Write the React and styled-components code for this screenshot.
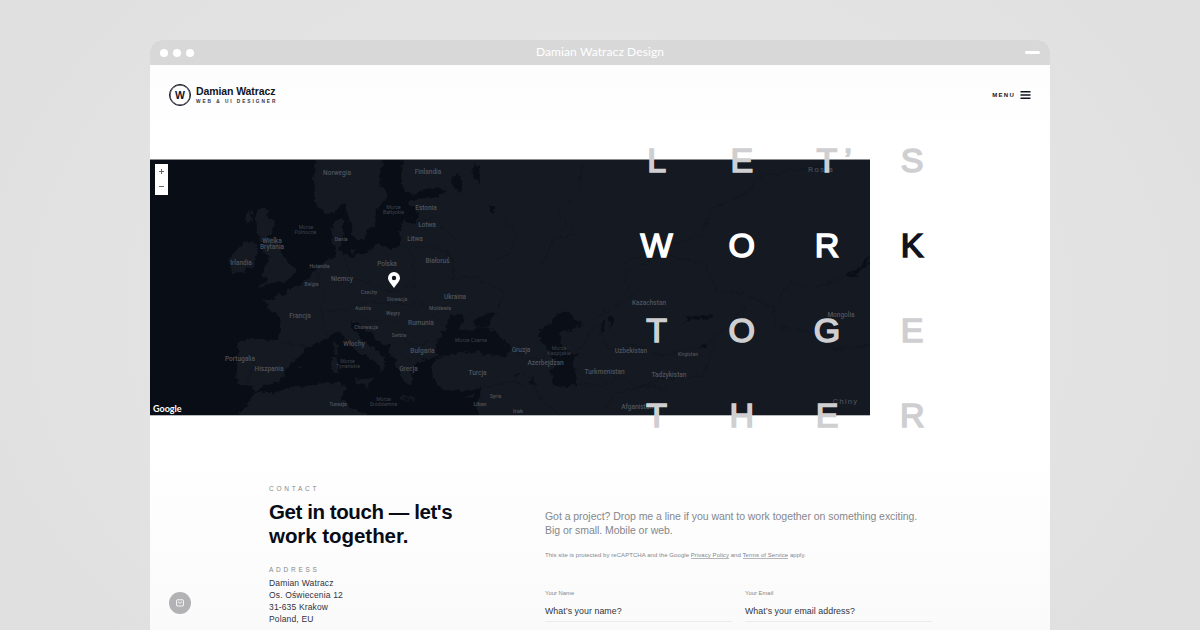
import React from "react";
import styled, { createGlobalStyle } from "styled-components";

const Global = createGlobalStyle`
  * { box-sizing: border-box; }
  body {
    margin: 0;
    overflow: hidden;
    font-family: "Liberation Sans", Arial, sans-serif;
    color: #10141f;
    background: #e1e1e1;
  }
`;

const Stage = styled.div`
  height: 630px;
  padding: 40px 150px 0;
  overflow: hidden;
  background: radial-gradient(ellipse 640px 480px at 50% 50%, #e5e5e5 0%, #e3e3e3 70%, #e0e0e0 100%);
`;

const Browser = styled.div`
  height: 590px;
  display: flex;
  flex-direction: column;
  overflow: hidden;
  border-radius: 12px 12px 0 0;
  background: #fff;
`;

const TitleBar = styled.div`
  height: 25px;
  flex: none;
  display: grid;
  grid-template-columns: 1fr auto 1fr;
  align-items: center;
  padding: 0 10px;
  background: #d8d8d8;
`;

const Dots = styled.div`
  display: flex;
  gap: 5px;
  padding-top: 1px;
`;

const Dot = styled.i`
  width: 8px;
  height: 8px;
  border-radius: 50%;
  background: #fff;
`;

const Title = styled.span`
  font: 400 12px/22px Lato, sans-serif;
  padding-bottom: 2px;
  letter-spacing: 0.1px;
  color: #fff;
`;

const Minimise = styled.i`
  justify-self: end;
  width: 15px;
  height: 3px;
  border-radius: 1.5px;
  background: #fff;
`;

const Page = styled.div`
  flex: 1;
  display: flex;
  flex-direction: column;
  position: relative;
  background: linear-gradient(#fdfdfd 0, #fff 80px, #fff 380px, #fafafa 100%);
`;

const Header = styled.header`
  height: 94px;
  flex: none;
  display: flex;
  align-items: flex-start;
  justify-content: space-between;
  padding: 19px 19px 0;
`;

const Brand = styled.div`
  display: flex;
  align-items: center;
  gap: 5px;
`;

const Logo = styled.div`
  width: 22px;
  height: 22px;
  display: grid;
  place-items: center;
  border: 1.5px solid #10141f;
  box-shadow: inset 0 0 0 0.5px #10141f;
  border-radius: 50%;
  font-size: 10.5px;
  font-weight: 700;
  line-height: 20px;
`;

const BrandName = styled.div`
  font-size: 10.5px;
  font-weight: 700;
  line-height: 12px;
  letter-spacing: -0.1px;
`;

const BrandRole = styled.div`
  font-size: 4.8px;
  font-weight: 700;
  line-height: 6px;
  margin-top: 2px;
  letter-spacing: 1.93px;
  white-space: nowrap;
  color: #30343d;
`;

const MenuButton = styled.div`
  display: flex;
  align-items: center;
  gap: 5px;
  height: 22px;
  font-size: 6px;
  font-weight: 700;
  letter-spacing: 1.25px;
`;

const Hero = styled.section`
  height: 257px;
  flex: none;
  position: relative;
`;

const MapBox = styled.div`
  width: 720px;
  height: 257px;
  border-top: 1px solid #8b8d91;
  border-bottom: 1px solid #b8babd;
`;

const Drawing = styled.svg`
  display: block;
`;

const ZoomControl = styled.div`
  position: absolute;
  left: 5px;
  top: 5px;
  width: 13px;
  height: 31px;
  display: grid;
  grid-template-rows: 1fr 1fr;
  place-items: center;
  background: #fff;
  color: #555;
`;

const GoogleMark = styled.span`
  position: absolute;
  left: 3px;
  bottom: 1px;
  font: 700 9px/12px Lato, sans-serif;
  color: #fff;
`;

const Letters = styled.div`
  position: absolute;
  left: 464px;
  top: -42px;
  display: grid;
  grid-template-columns: repeat(4, 85.2px);
  grid-auto-rows: 85.2px;
  place-items: center;
  font-size: 34px;
  font-weight: 400;
  line-height: 1;
`;

const Letter = styled.span`
  position: relative;
  color: ${(p) => p.$color};
  -webkit-text-stroke: 1.6px ${(p) => p.$color};
`;

const Apostrophe = styled.span`
  position: absolute;
  left: calc(100% + 7px);
`;

const Contact = styled.section`
  display: grid;
  grid-template-columns: 276px 387px;
  padding: 0 0 0 119px;
`;

const Info = styled.div`
  padding-top: 69px;
`;

const Eyebrow = styled.div`
  font-size: 6.5px;
  line-height: 8px;
  letter-spacing: 2.75px;
  color: #85878c;
`;

const Heading = styled.h1`
  margin: 7px 0 18px;
  font-size: 20.5px;
  line-height: 24px;
  font-weight: 700;
  color: #070c17;
`;

const HeadingLine = styled.span`
  display: block;
  letter-spacing: ${(p) => p.$tracking}px;
`;

const Address = styled.address`
  margin-top: 3px;
  font-style: normal;
  font-size: 8.5px;
  line-height: 12px;
  letter-spacing: 0.15px;
  color: #30343d;
`;

const FormSide = styled.div`
  padding-top: 93px;
`;

const Lead = styled.p`
  margin: 0;
  font-size: 10.5px;
  line-height: 14px;
  letter-spacing: -0.045px;
  white-space: nowrap;
  color: #85878c;
`;

const Legal = styled.p`
  margin: 14px 0 0;
  font-size: 6px;
  line-height: 8px;
  letter-spacing: 0.06px;
  white-space: nowrap;
  color: #85878c;
`;

const Link = styled.a`
  border-bottom: 1px solid #b5b6b9;
`;

const Fields = styled.div`
  display: grid;
  grid-template-columns: 187px 187px;
  gap: 13px;
  margin-top: 30px;
`;

const Field = styled.div`
  height: 33px;
  border-bottom: 1px solid #ebebec;
`;

const FieldLabel = styled.div`
  font-size: 5.9px;
  line-height: 8px;
  color: #85878c;
`;

const FieldValue = styled.div`
  margin-top: 8px;
  font-size: 8.8px;
  line-height: 12px;
  letter-spacing: 0.06px;
  color: #30343d;
`;

const MailButton = styled.div`
  position: absolute;
  left: 19px;
  top: 527px;
  width: 22px;
  height: 22px;
  display: grid;
  place-items: center;
  border-radius: 50%;
  background: #b2b2b4;
`;

const countries = [
  ["Norwegia", 337, 175, 6.5], ["Finlandia", 428, 174, 6.5], ["Estonia", 426, 210, 6.5],
  ["Łotwa", 427, 227, 6.5], ["Litwa", 415, 241, 6.5], ["Białoruś", 437.5, 263, 6.5],
  ["Wielka", 272, 243, 6.5], ["Brytania", 272, 249, 6.5], ["Irlandia", 241, 265, 6.5],
  ["Dania", 341, 241, 5], ["Holandia", 319.5, 268, 5], ["Belgia", 311.5, 286, 5],
  ["Niemcy", 342, 280.5, 6.5], ["Polska", 387, 265.5, 6.5], ["Czechy", 369, 294, 5],
  ["Słowacja", 397, 301, 5], ["Ukraina", 455, 298.5, 6.5], ["Francja", 300, 318, 6.5],
  ["Austria", 363, 310, 5], ["Węgry", 393, 314.5, 5], ["Mołdawia", 440, 310, 5],
  ["Rumunia", 421, 324.5, 6.5], ["Chorwacja", 366, 329, 5], ["Serbia", 399, 336.5, 5],
  ["Włochy", 354, 345.5, 6.5], ["Bułgaria", 422.5, 353, 6.5], ["Portugalia", 240, 361, 6.5],
  ["Hiszpania", 269, 370.5, 6.5], ["Grecja", 408.5, 371, 6.5], ["Turcja", 477.5, 374.5, 6.5],
  ["Gruzja", 521, 351.5, 6.5], ["Azerbejdżan", 545.5, 364.5, 6.5], ["Tunezja", 338, 406, 5],
  ["Syria", 495.5, 398, 5], ["Liban", 480, 406, 5.3], ["Irak", 518, 413, 6],
  ["Turkmenistan", 604.5, 374, 6.5], ["Uzbekistan", 631, 353, 6.5], ["Kirgistan", 688, 356, 5],
  ["Tadżykistan", 669, 377, 6.5], ["Kazachstan", 649, 305, 6.5], ["Mongolia", 841, 316.5, 6.5],
];

const seas = [
  ["Morze", 306, 229], ["Północne", 305.5, 233.5], ["Morze", 393.5, 209], ["Bałtyckie", 393.5, 213.5],
  ["Morze", 347.5, 363], ["Tyrreńskie", 348, 368], ["Morze", 383.5, 401], ["Śródziemne", 383.5, 406],
  ["Morze Czarne", 471, 342], ["Morze", 559, 350], ["Kaspijskie", 559, 355],
];

const land = [
  // Scandinavia
  "M318 155 316 166 313 172 315 184 314 196 317 206 322 213 330 214 338 209 345 203 347 212 351 226 353 236 358 241 364 238 367 230 375 226 376 216 379 206 387 197 386 190 380 186 379 175 384 155Z",
  // Continental Europe and Asia
  "M402 155 401 178 405 190 411 194 425 190 438 187 447 192 436 197 416 199 408 203 411 206 418 210 417 223 410 224 405 218 400 228 401 243 394 249 388 247 378 245 369 250 358 254 350 257 343 255 339 248 343 232 342 219 335 222 331 229 333 245 336 257 320 264 313 272 303 283 296 286 288 290 285 297 276 293 275 300 262 300 270 308 279 317 281 335 277 340 250 338 240 340 237 343 239 352 237 368 236 378 240 384 250 386 256 391 264 386 275 384 284 378 287 368 303 354 305 347 318 343 328 338 337 332 345 338 355 350 365 356 378 362 382 374 385 369 383 362 387 362 377 350 366 343 354 330 352 323 358 323 368 332 380 342 391 348 393 360 400 372 406 385 412 382 411 370 417 363 430 359 436 357 432 366 434 377 438 387 450 391 465 391 481 387 478 404 476 420 890 420 890 150 402 150Z",
  // North Africa
  "M234 420 244 409 251 401 254 393 275 393 290 387 315 385 338 383 345 386 342 399 350 408 365 414 370 420Z",
  // British Isles
  "M258 210 270 208 267 218 276 220 272 232 267 237 276 241 283 253 288 263 296 268 292 277 285 282 268 285 259 288 267 280 262 274 266 264 271 256 262 253 264 243 257 234 258 225 254 219Z",
  "M243 243 255 242 258 250 254 265 243 272 232 274 230 262 233 252 240 248Z",
  // Islands
  "M333 344 337 344 338 355 334 354Z", "M332 357 338 357 338 372 332 372Z",
  "M355 379 371 377 368 388 357 384Z", "M399 397 416 398 415 400 400 399Z", "M466 396 475 393 472 399Z",
  "M298 367 305 366 302 370Z", "M246 216 251 210 251 220 247 224Z", "M350 250 356 249 354 254Z",
];

const water = [
  "M450 317 462 315 466 321 457 327 466 331 478 327 491 329 505 341 512 350 505 357 490 355 470 350 455 354 441 356 435 351 438 340 444 331Z",
  "M473 322 480 317 498 311 491 319 487 327 476 326Z",
  "M540 330 549 325 557 314 570 312 574 321 582 324 572 330 561 332 559 343 565 351 580 355 572 360 576 374 577 385 566 388 552 383 550 372 556 362 546 348 540 340Z",
  "M451 178 457 175 463 182 461 191 453 187Z", "M473 161 479 169 480 182 474 178Z",
  "M488 204 494 207 494 214 489 210Z", "M434 357 444 357 440 361 434 361Z",
  "M601 320 605 319 603 332 600 330Z", "M609 316 614 318 611 330Z",
  "M683 324 688 317 702 315 713 317 704 320 690 319Z", "M698 347 707 344 705 349Z",
  "M846 274 858 269 869 256 868 264 858 275 848 277Z", "M515 374 520 373 517 377Z", "M532 377 534 386 530 382Z",
];

const borders = [
  "M408 248 414 257 413 270 416 284", "M404 247 430 246 448 253 455 266 453 279 470 276 490 285 503 292 499 307",
  "M418 222 436 217 442 226 455 239", "M344 258 351 278 370 282 380 288 392 291 415 285",
  "M320 264 317 282 325 296 321 309 330 311 347 309 360 303 377 302 408 304 424 302 435 318 442 325",
  "M321 309 324 324 328 337", "M359 316 374 322 391 318 404 330 406 342 421 345 440 338",
  "M402 348 405 358 433 356", "M249 350 254 362 248 382", "M280 342 305 347",
  "M512 349 528 360 545 356", "M519 369 532 383 540 399 560 414", "M477 390 508 382 524 384",
  "M572 330 594 319 632 297 622 275 661 255 704 263 719 291 745 293 773 308 777 326 808 332 836 350 870 344",
  "M577 352 596 326 609 349 630 344 659 356 706 345 726 328 746 305",
  "M577 382 602 386 622 376 638 389 660 379 702 376 714 347", "M601 414 617 392 646 386 668 390",
  "M773 308 791 281 811 289 844 277", "M540 268 553 241 574 234 558 211 579 192 582 166",
  "M620 264 660 248 702 234 711 209 744 195 760 176 820 166", "M500 220 517 233 512 251 495 262",
];

const glyphs = [
  ["L", "#cfcfd1"], ["E", "#cfcfd1"], ["T", "#cfcfd1", "’"], ["S", "#cfcfd1"],
  ["W", "#fff"], ["O", "#fff"], ["R", "#fff"], ["K", "#10141f"],
  ["T", "#cfcfd1"], ["O", "#cfcfd1"], ["G", "#cfcfd1"], ["E", "#cfcfd1"],
  ["T", "#cfcfd1"], ["H", "#cfcfd1"], ["E", "#cfcfd1"], ["R", "#cfcfd1"],
];

function EuropeMap() {
  return (
    <Drawing width="720" height="255" viewBox="150 160 720 255">
      <defs>
        <filter id="coast" x="-5%" y="-5%" width="110%" height="110%" colorInterpolationFilters="sRGB">
          <feTurbulence type="fractalNoise" baseFrequency="0.16" numOctaves="3" seed="4" />
          <feDisplacementMap in="SourceGraphic" scale="8" xChannelSelector="R" yChannelSelector="G" />
        </filter>
      </defs>
      <rect x="150" y="160" width="720" height="255" fill="#080d16" />
      <g filter="url(#coast)">
        {land.map((d) => <path key={d} d={d} fill="#141922" />)}
        {water.map((d) => <path key={d} d={d} fill="#090e17" />)}
        {borders.map((d) => <path key={d} d={d} fill="none" stroke="#0f141d" strokeWidth="0.8" />)}
      </g>
      <g fontFamily="Roboto, sans-serif" textAnchor="middle" fill="#50545c">
        {countries.map(([name, x, y, size]) => (
          <text key={name} x={x} y={y} fontSize={size} fontWeight="500">{name}</text>
        ))}
        <text x="821" y="172" fontSize="8" letterSpacing="1.2">Rosja</text>
        <text x="845.5" y="403.500" fontSize="8" letterSpacing="1.1">Chiny</text>
        <text x="637" y="409" fontSize="6.5" fontWeight="500">Afganistan</text>
      </g>
      <g fontFamily="Roboto, sans-serif" textAnchor="middle" fill="#3d424b" fontSize="5.2">
        {seas.map(([name, x, y]) => <text key={name + x} x={x} y={y}>{name}</text>)}
      </g>
      <path d="M394 288C391 283.500 388 281 388 278a6 6 0 0 1 12 0c0 3-3 5.500-6 10Z" fill="#fff" />
      <circle cx="394" cy="278" r="2.200" fill="#10141f" />
    </Drawing>
  );
}

export default function App() {
  return (
    <>
      <Global />
      <Stage>
        <Browser>
          <TitleBar>
            <Dots><Dot /><Dot /><Dot /></Dots>
            <Title>Damian Watracz Design</Title>
            <Minimise />
          </TitleBar>
          <Page>
            <Header>
              <Brand>
                <Logo>W</Logo>
                <div>
                  <BrandName>Damian Watracz</BrandName>
                  <BrandRole>WEB &amp; UI DESIGNER</BrandRole>
                </div>
              </Brand>
              <MenuButton>
                MENU
                <Drawing width="11" height="8" viewBox="0 0 11 8">
                  <path d="M.5 .8h10M.5 4h10M.5 7.200h10" stroke="#10141f" strokeWidth="1.600" />
                </Drawing>
              </MenuButton>
            </Header>
            <Hero>
              <MapBox><EuropeMap /></MapBox>
              <ZoomControl>
                <Drawing width="7" height="7" viewBox="0 0 7 7"><path d="M1 3.500h5M3.500 1v5" stroke="#666" /></Drawing>
                <Drawing width="7" height="7" viewBox="0 0 7 7"><path d="M1 2.500h5" stroke="#666" /></Drawing>
              </ZoomControl>
              <GoogleMark>Google</GoogleMark>
              <Letters>
                {glyphs.map(([char, color, mark], i) => (
                  <Letter key={i} $color={color}>
                    {char}
                    {mark && <Apostrophe>{mark}</Apostrophe>}
                  </Letter>
                ))}
              </Letters>
            </Hero>
            <Contact>
              <Info>
                <Eyebrow>CONTACT</Eyebrow>
                <Heading>
                  <HeadingLine $tracking={-0.42}>Get in touch — let's</HeadingLine>
                  <HeadingLine $tracking={-0.05}>work together.</HeadingLine>
                </Heading>
                <Eyebrow>ADDRESS</Eyebrow>
                <Address>
                  Damian Watracz<br />Os. Oświecenia 12<br />31-635 Krakow<br />Poland, EU
                </Address>
              </Info>
              <FormSide>
                <Lead>
                  Got a project? Drop me a line if you want to work together on something exciting.
                  <br />Big or small. Mobile or web.
                </Lead>
                <Legal>
                  This site is protected by reCAPTCHA and the Google <Link>Privacy Policy</Link> and{" "}
                  <Link>Terms of Service</Link> apply.
                </Legal>
                <Fields>
                  <Field>
                    <FieldLabel>Your Name</FieldLabel>
                    <FieldValue>What’s your name?</FieldValue>
                  </Field>
                  <Field>
                    <FieldLabel>Your Email</FieldLabel>
                    <FieldValue>What’s your email address?</FieldValue>
                  </Field>
                </Fields>
              </FormSide>
            </Contact>
            <MailButton>
              <Drawing width="8" height="8" viewBox="0 0 8 8" fill="none" stroke="#fff" strokeWidth="0.9">
                <rect x="0.6" y="0.8" width="6.800" height="6.200" rx="0.5" />
                <path d="M2 2.800 4 4.300 6 2.800" />
              </Drawing>
            </MailButton>
          </Page>
        </Browser>
      </Stage>
    </>
  );
}
